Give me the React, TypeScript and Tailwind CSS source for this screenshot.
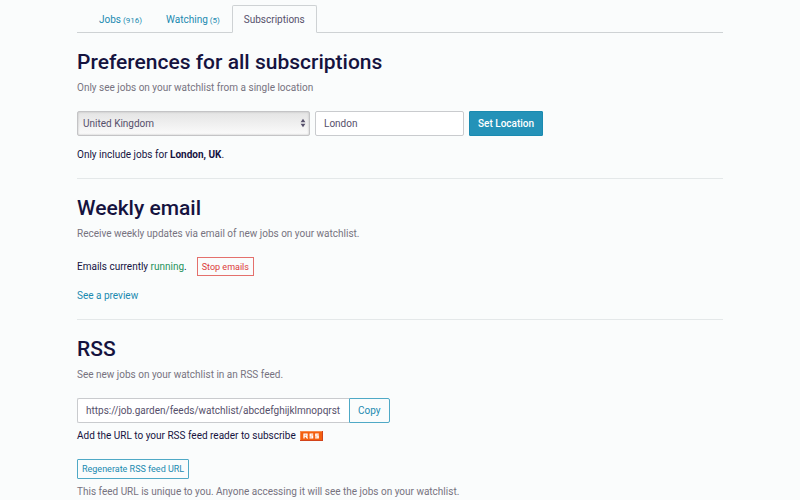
import type { ReactNode } from "react";
import clsx from "clsx";

const tabs = [
  { label: "Jobs", count: 916 },
  { label: "Watching", count: 5 },
  { label: "Subscriptions", active: true },
];

const countries = ["United Kingdom", "United States", "Ireland", "Germany"];

const Tabs = () => (
  <nav className="flex items-end border-b border-[#ced2d4] pl-2.5 pt-[5px]">
    {tabs.map((tab) => (
      <a
        key={tab.label}
        href="#"
        aria-current={tab.active ? "page" : undefined}
        className={clsx(
          "-mb-px h-7 rounded-t-xs border px-[11px] leading-7",
          tab.active
            ? "border-[#ced2d4] border-b-[#fafcfc] bg-[#fafcfc] text-[#56506b]"
            : "border-transparent text-[#1a8ab0]"
        )}
      >
        {tab.label}
        {tab.count && <span className="text-[8px]"> ({tab.count})</span>}
      </a>
    ))}
  </nav>
);

const Section = ({ title, hint, children }: { title: string; hint: string; children: ReactNode }) => (
  <section className="border-b border-[#e4e8e9] pb-[15px] pt-4 last:border-b-0 last:pb-0">
    <h2 className="text-[21px] font-medium leading-[26px]">{title}</h2>
    <p className="mb-[15px] mt-[5px] text-[#77737f]">{hint}</p>
    {children}
  </section>
);

const RssBadge = () => (
  <svg viewBox="0 0 23 10" className="ml-0.5 inline-block h-2.5 w-[23px] align-[-2px]" role="img" aria-label="RSS">
    <rect width="23" height="10" fill="#d2431a" />
    <rect width="22" height="9" fill="#f58a4c" />
    <rect x="1" y="1" width="21" height="8" fill="#f4600f" />
    <g fill="none" stroke="#fff" strokeWidth="1.3">
      <path d="M4 7.6V3.1H7V5.1H4.6M5.6 5.1L7.6 7.5" />
      <path d="M13.2 3.1H10.2V5H12.6V6.9H9.5" />
      <path d="M18.8 3.1H15.8V5H18.2V6.9H15.1" />
    </g>
  </svg>
);

const App = () => (
  <div className="min-h-screen bg-[#fafcfc] font-['Roboto',sans-serif] text-[10px] leading-4 text-[#15133f]">
    <main className="mx-auto max-w-[646px]">
      <Tabs />

      <Section title="Preferences for all subscriptions" hint="Only see jobs on your watchlist from a single location">
        <form className="flex gap-[5px]" onSubmit={(e) => e.preventDefault()}>
          <div className="relative w-[233px]">
            <select
              aria-label="Country"
              className="h-[25px] w-full appearance-none rounded-xs border border-[#c4c4c6] bg-linear-to-b from-[#e4e4e4] to-[#fbfbfb] px-[5px] text-[#56506b] shadow-[inset_0_0_2px_#b4b4b4]"
            >
              {countries.map((c) => (
                <option key={c}>{c}</option>
              ))}
            </select>
            <svg viewBox="0 0 6 10" className="pointer-events-none absolute right-1 top-[7px] h-2.5 w-1.5" fill="#56506b">
              <path d="M3 .8L5.4 4.2H.6zM3 9.2L.6 5.8h4.8z" />
            </svg>
          </div>
          <input
            aria-label="City"
            defaultValue="London"
            className="h-[25px] w-[149px] rounded-xs border border-[#c9cbce] bg-white px-2 text-[#56506b]"
          />
          <button className="h-[25px] rounded-[1px] border border-[#1a8ab0] bg-[#2492b8] px-2 font-medium text-white">
            Set Location
          </button>
        </form>
        <p className="mt-[11px]">
          Only include jobs for <strong className="font-bold">London, UK</strong>.
        </p>
      </Section>

      <Section title="Weekly email" hint="Receive weekly updates via email of new jobs on your watchlist.">
        <div className="flex items-center gap-2.5">
          <p>
            Emails currently <span className="text-[#23925a]">running</span>.
          </p>
          <button className="h-[19px] border border-[#e4706c] px-1 text-[9px] text-[#dc3c3a]">
            Stop emails
          </button>
        </div>
        <p className="mt-3">
          <a href="#" className="text-[#1a8ab0]">See a preview</a>
        </p>
      </Section>

      <Section title="RSS" hint="See new jobs on your watchlist in an RSS feed.">
        <div className="flex">
          <input
            aria-label="RSS feed URL"
            readOnly
            value="https://job.garden/feeds/watchlist/abcdefghijklmnopqrst"
            className="h-[25px] w-[272px] rounded-l-xs border border-r-0 border-[#c9cbce] bg-white px-2 text-[#56506b]"
          />
          <button className="h-[25px] rounded-r-xs border border-[#4fa9c6] px-2 text-[#1a8ab0]">Copy</button>
        </div>
        <p className="mt-[5px]">
          Add the URL to your RSS feed reader to subscribe <RssBadge />
        </p>
        <button className="mt-[15px] block h-5 rounded-[1px] border border-[#4fa9c6] px-1 text-[9px] text-[#1a8ab0]">
          Regenerate RSS feed URL
        </button>
        <p className="mt-[5px] text-[#77737f]">
          This feed URL is unique to you. Anyone accessing it will see the jobs on your watchlist.
        </p>
      </Section>
    </main>
  </div>
);

export default App;
